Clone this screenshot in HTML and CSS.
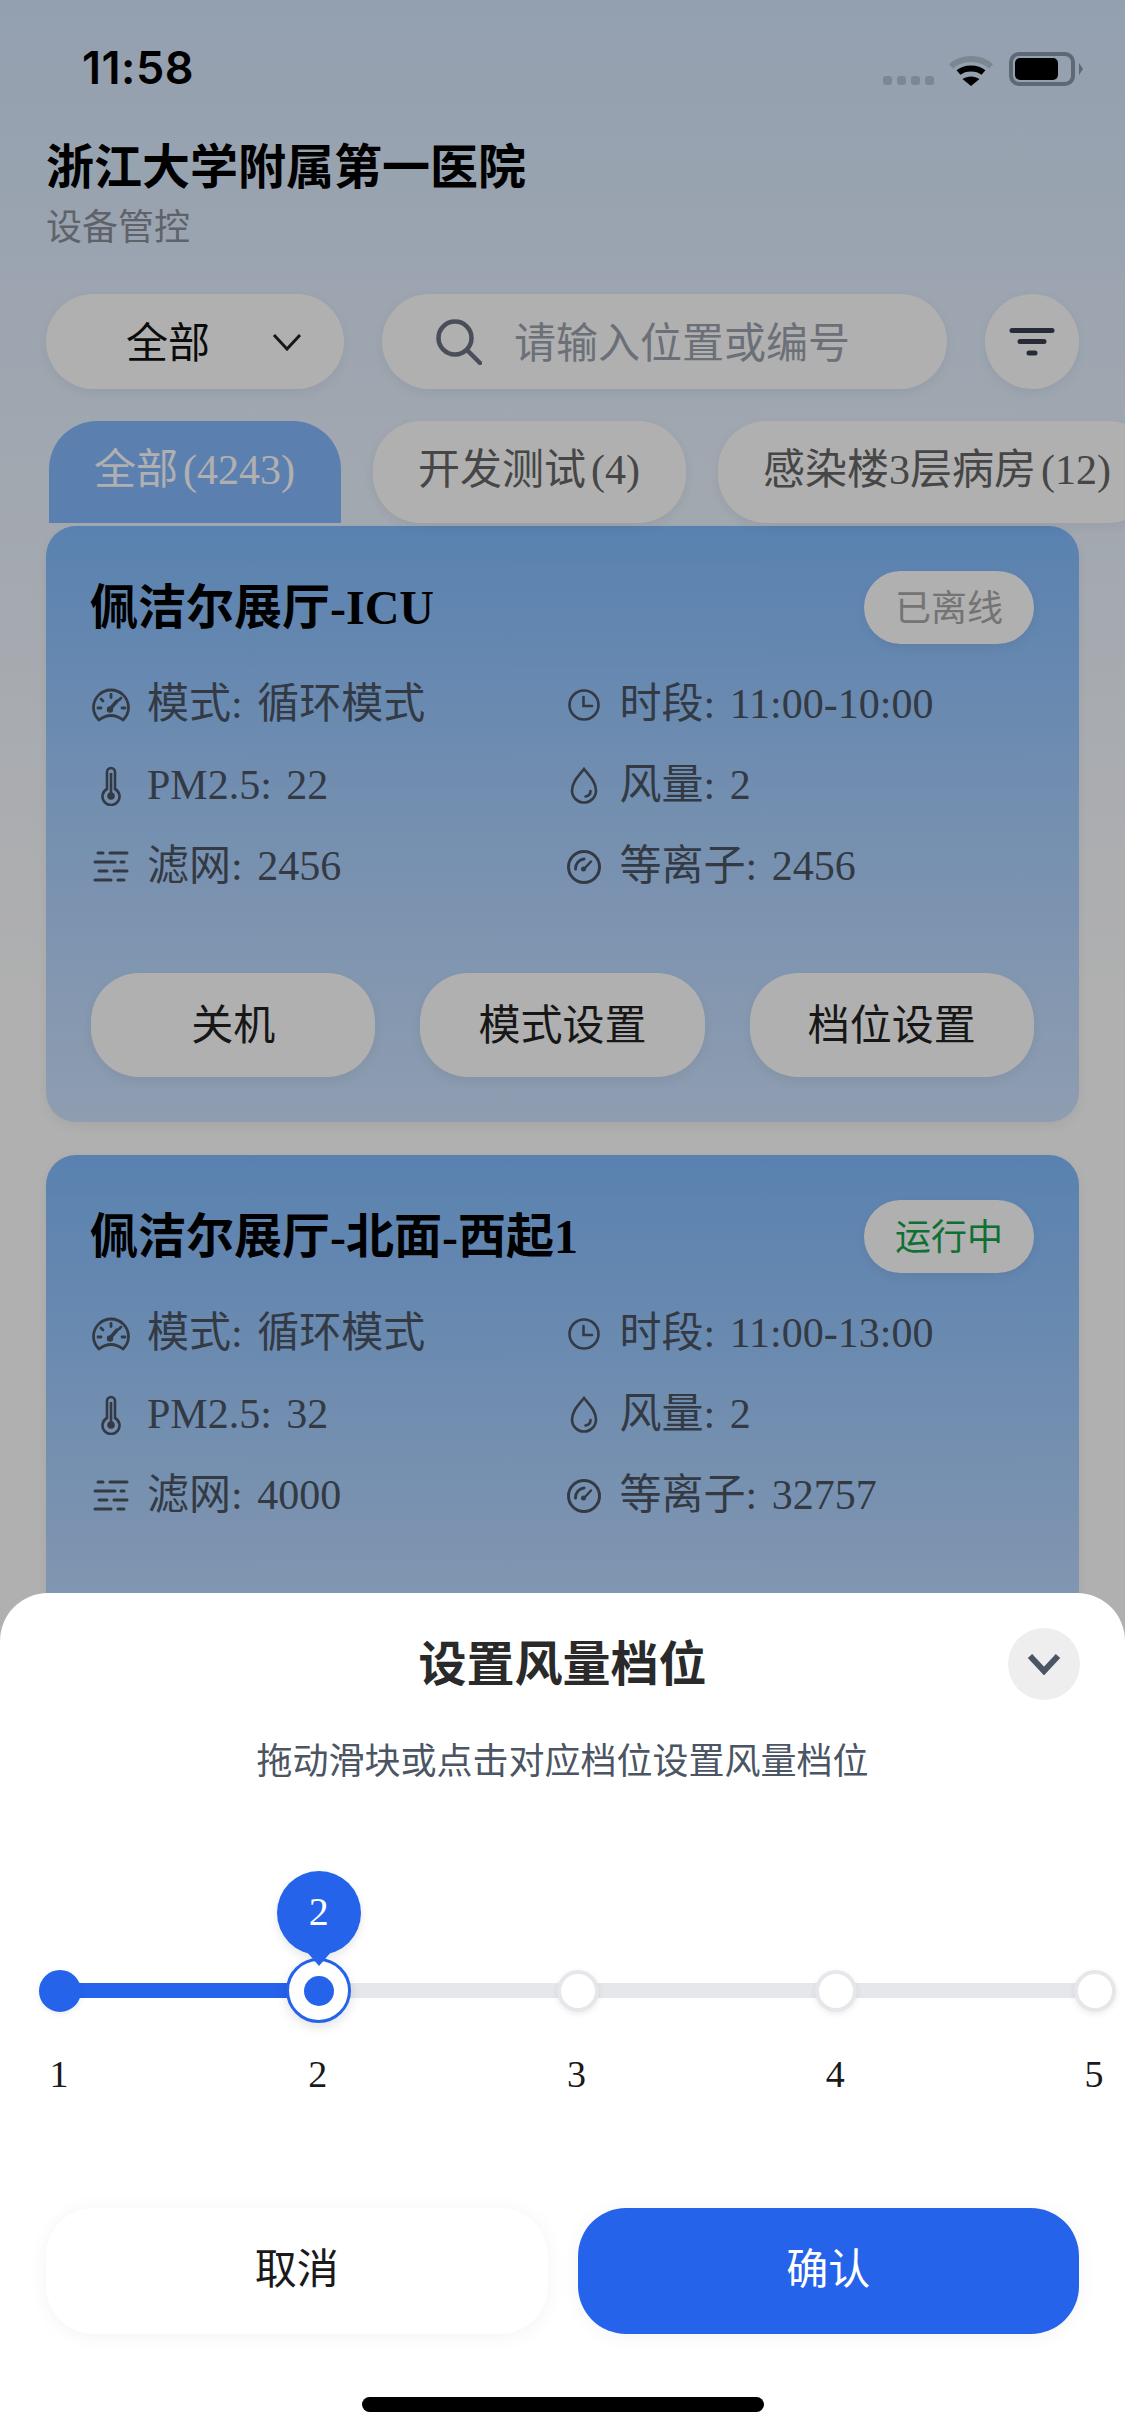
FILE: index.html
```html
<!DOCTYPE html>
<html lang="zh-CN">
<head>
    <meta charset="UTF-8">
    <meta name="viewport" content="width=device-width, initial-scale=1.0">
    <title>设备管控</title>
    <link rel="stylesheet" href="styles.css">
</head>
<body>
    <div class="page">
        <div class="status-bar">
            <span class="time">11:58</span>
            <div class="status-icons">
                <div class="signal"><i></i><i></i><i></i><i></i></div>
                <svg class="wifi" width="46" height="34" viewBox="0 0 46 34" fill="none">
                    <path d="M3 14.5C13.5 4.5 32.5 4.5 43 14.5" stroke="#7d8794" stroke-width="6"/>
                    <path d="M10.5 20.5C17 15 29 15 35.5 20.5" stroke="#000" stroke-width="6"/>
                    <path d="M23 34L14.5 27C19.5 23.5 26.5 23.5 31.5 27Z" fill="#000"/>
                </svg>
                <div class="battery"><i></i></div>
            </div>
        </div>

        <header class="header">
            <h1>浙江大学附属第一医院</h1>
            <p>设备管控</p>
        </header>

        <div class="controls">
            <div class="select">
                <span>全部</span>
                <svg width="30" height="18" viewBox="0 0 30 18" fill="none"><path d="M2 2L15 16L28 2" stroke="#222" stroke-width="3"/></svg>
            </div>
            <div class="search">
                <svg width="46" height="46" viewBox="0 0 46 46" fill="none" stroke="#6b7280" stroke-width="4.5">
                    <circle cx="19" cy="19" r="16.5"/>
                    <path d="M31 31L44 44" stroke-linecap="round"/>
                </svg>
                <span>请输入位置或编号</span>
            </div>
            <div class="filter-btn">
                <svg width="46" height="28" viewBox="0 0 46 28" fill="none" stroke="#374151" stroke-width="5" stroke-linecap="round">
                    <path d="M3 2.5H43"/>
                    <path d="M11 13.500H35"/>
                    <path d="M20 25H26"/>
                </svg>
            </div>
        </div>

        <div class="tabs">
            <div class="tab active">全部<span>(4243)</span></div>
            <div class="tab">开发测试<span>(4)</span></div>
            <div class="tab">感染楼3层病房<span>(12)</span></div>
        </div>

        <div class="card">
            <div class="card-top">
                <h2>佩洁尔展厅-ICU</h2>
                <span class="pill offline">已离线</span>
            </div>
            <div class="info">
                <div class="row">
                    <svg class="ic" width="38" height="34" viewBox="0 0 38 34"><use href="#i-gauge"/></svg>
                    <span>模式: 循环模式</span>
                </div>
                <div class="row">
                    <svg class="ic" width="32" height="32" viewBox="0 0 32 32"><use href="#i-clock"/></svg>
                    <span>时段: 11:00-10:00</span>
                </div>
                <div class="row">
                    <svg class="ic" width="20" height="40" viewBox="0 0 20 40"><use href="#i-thermo"/></svg>
                    <span>PM2.5: 22</span>
                </div>
                <div class="row">
                    <svg class="ic" width="28" height="38" viewBox="0 0 28 38"><use href="#i-drop"/></svg>
                    <span>风量: 2</span>
                </div>
                <div class="row">
                    <svg class="ic" width="36" height="32" viewBox="0 0 36 32"><use href="#i-lines"/></svg>
                    <span>滤网: 2456</span>
                </div>
                <div class="row">
                    <svg class="ic" width="36" height="36" viewBox="0 0 36 36"><use href="#i-dial"/></svg>
                    <span>等离子: 2456</span>
                </div>
            </div>
            <div class="actions">
                <button>关机</button>
                <button>模式设置</button>
                <button>档位设置</button>
            </div>
        </div>

        <div class="card">
            <div class="card-top">
                <h2>佩洁尔展厅-北面-西起1</h2>
                <span class="pill running">运行中</span>
            </div>
            <div class="info">
                <div class="row">
                    <svg class="ic" width="38" height="34" viewBox="0 0 38 34"><use href="#i-gauge"/></svg>
                    <span>模式: 循环模式</span>
                </div>
                <div class="row">
                    <svg class="ic" width="32" height="32" viewBox="0 0 32 32"><use href="#i-clock"/></svg>
                    <span>时段: 11:00-13:00</span>
                </div>
                <div class="row">
                    <svg class="ic" width="20" height="40" viewBox="0 0 20 40"><use href="#i-thermo"/></svg>
                    <span>PM2.5: 32</span>
                </div>
                <div class="row">
                    <svg class="ic" width="28" height="38" viewBox="0 0 28 38"><use href="#i-drop"/></svg>
                    <span>风量: 2</span>
                </div>
                <div class="row">
                    <svg class="ic" width="36" height="32" viewBox="0 0 36 32"><use href="#i-lines"/></svg>
                    <span>滤网: 4000</span>
                </div>
                <div class="row">
                    <svg class="ic" width="36" height="36" viewBox="0 0 36 36"><use href="#i-dial"/></svg>
                    <span>等离子: 32757</span>
                </div>
            </div>
        </div>
    </div>

    <div class="overlay"></div>

    <div class="sheet">
        <h3>设置风量档位</h3>
        <div class="close-btn">
            <svg width="34" height="22" viewBox="0 0 34 22" fill="none"><path d="M3 3L17 18L31 3" stroke="#4b5563" stroke-width="6"/></svg>
        </div>
        <p class="hint">拖动滑块或点击对应档位设置风量档位</p>

        <div class="slider">
            <div class="track"></div>
            <div class="track-fill"></div>
            <div class="stop"><div class="dot done"></div><span>1</span></div>
            <div class="stop">
                <div class="bubble">2</div>
                <div class="dot current"><i></i></div>
                <span>2</span>
            </div>
            <div class="stop"><div class="dot"></div><span>3</span></div>
            <div class="stop"><div class="dot"></div><span>4</span></div>
            <div class="stop"><div class="dot"></div><span>5</span></div>
        </div>

        <div class="sheet-actions">
            <button class="cancel">取消</button>
            <button class="confirm">确认</button>
        </div>
        <div class="home-bar"></div>
    </div>

    <!-- icons used by the cards -->
    <svg class="defs" width="0" height="0">
        <defs>
            <g id="i-gauge" fill="none" stroke="currentColor" stroke-width="2.8" stroke-linecap="round">
                <path d="M7 32C3.500 28.500 1.500 24.500 1.500 19.500A17.500 17.500 0 0 1 36.500 19.500C36.500 24.500 34.500 28.500 31 32C27 29 23 27.500 19 27.500C15 27.500 11 29 7 32Z"/>
                <path d="M19 6.500V9.500"/>
                <path d="M9 11L11 13"/>
                <path d="M6 20H9"/>
                <path d="M30 20H33"/>
                <path d="M29 10L27 12"/>
                <path d="M18 21L25 13" stroke-width="3.500"/>
                <circle cx="18" cy="21.500" r="1.800" fill="currentColor"/>
            </g>
            <g id="i-clock" fill="none" stroke="currentColor" stroke-width="2.600" stroke-linecap="round">
                <circle cx="16" cy="16" r="14.500"/>
                <path d="M15.500 8V17H24"/>
            </g>
            <g id="i-thermo" fill="none" stroke="currentColor" stroke-width="2.600">
                <path d="M6 23V6A4 4 0 0 1 14 6V23A8.500 8.500 0 1 1 6 23Z"/>
                <path d="M10 7V27"/>
                <circle cx="10" cy="30" r="3.800" fill="currentColor" stroke="none"/>
            </g>
            <g id="i-drop" fill="none" stroke="currentColor" stroke-width="2.600" stroke-linecap="round">
                <path d="M14 2C9 8.500 2 15 2 23.500A12 12 0 0 0 26 23.500C26 15 19 8.500 14 2Z"/>
                <path d="M20.500 24C20.500 27 18.500 29 15.500 29.500"/>
            </g>
            <g id="i-lines" fill="none" stroke="currentColor" stroke-width="3" stroke-linecap="round">
                <path d="M5 2H10M17 2H34"/>
                <path d="M2 11H22M28 11H31"/>
                <path d="M6 20H14M21 20H34"/>
                <path d="M2 29H18M25 29H31"/>
            </g>
            <g id="i-dial" fill="none" stroke="currentColor" stroke-width="3" stroke-linecap="round">
                <circle cx="18" cy="18" r="15.500"/>
                <path d="M9.500 20C9.500 14.500 13 10.500 18 10"/>
                <path d="M18 20L25 12.500" stroke-width="2.500"/>
                <circle cx="17.500" cy="20" r="2.500" fill="currentColor" stroke="none"/>
            </g>
        </defs>
    </svg>
</body>
</html>
```

FILE: styles.css
```css
* {
    box-sizing: border-box;
}

html, body {
    margin: 0;
    padding: 0;
}

body {
    width: 1125px;
    height: 2436px;
    position: relative;
    overflow: hidden;
    font-family: "Liberation Serif", "Noto Sans CJK SC", serif;
    color: #111;
}

h1, h2, h3, p {
    margin: 0;
}

button {
    border: none;
    font-family: inherit;
    cursor: pointer;
}

.page {
    height: 2436px;
    overflow: hidden;
    padding: 0 46px;
    background: linear-gradient(180deg, #d6e8ff 0, #ffffff 1000px);
}

.overlay {
    position: absolute;
    inset: 0;
    background: rgba(0, 0, 0, 0.31);
}

.defs {
    position: absolute;
}

/* status bar */
.status-bar {
    position: relative;
    z-index: 2;
    height: 133px;
    padding: 43px 4px 0 36px;
    display: flex;
    justify-content: space-between;
    align-items: flex-start;
}

.time {
    font-family: Inter, sans-serif;
    font-size: 45px;
    font-weight: 600;
    line-height: 50px;
    letter-spacing: 0.5px;
    color: #000;
}

.status-icons {
    display: flex;
    align-items: flex-end;
    margin-top: 9px;
}

.signal {
    display: flex;
    gap: 5px;
    margin: 0 14px 1px 0;
}

.signal i {
    width: 9px;
    height: 9px;
    border-radius: 3px;
    background: #7d8794;
}

.wifi {
    margin-right: 15px;
}

.battery {
    width: 66px;
    height: 34px;
    border: 4px solid #5e6877;
    border-radius: 10px;
    padding: 2px;
    position: relative;
}

.battery i {
    display: block;
    width: 43px;
    height: 22px;
    border-radius: 5px;
    background: #000;
}

.battery::after {
    content: "";
    position: absolute;
    right: -12px;
    top: 7px;
    border-left: 4px solid #5e6877;
    border-top: 6px solid transparent;
    border-bottom: 6px solid transparent;
}

/* header */
.header h1 {
    font-family: "Noto Sans CJK SC", sans-serif;
    font-size: 48px;
    font-weight: 700;
    line-height: 60px;
    color: #000;
}

.header p {
    font-family: "Noto Sans CJK SC", sans-serif;
    font-size: 36px;
    line-height: 48px;
    margin-top: 7px;
    color: #8a9099;
}

/* search row */
.controls {
    display: flex;
    gap: 38px;
    margin-top: 46px;
    height: 95px;
}

.select, .search, .filter-btn, .tab, .pill, .actions button {
    background: #fff;
    box-shadow: 0 4px 12px rgba(0, 0, 0, 0.06);
}

.select {
    width: 298px;
    border-radius: 48px;
    display: flex;
    align-items: center;
    padding: 0 42px 0 80px;
    justify-content: space-between;
    font-family: "Noto Sans CJK SC", sans-serif;
    font-size: 42px;
}

.search {
    width: 565px;
    border-radius: 48px;
    display: flex;
    align-items: center;
    padding-left: 54px;
    gap: 32px;
    font-family: "Noto Sans CJK SC", sans-serif;
    font-size: 42px;
    color: #9ca3af;
}

.select span, .search span {
    margin-bottom: 4px;
}

.filter-btn {
    width: 94px;
    border-radius: 50%;
    display: flex;
    align-items: center;
    justify-content: center;
}

/* tabs */
.tabs {
    display: flex;
    gap: 32px;
    margin: 32px -46px 0 3px;
    height: 102px;
}

.tab {
    flex-shrink: 0;
    padding: 0 46px 4px 45px;
    border-radius: 48px;
    display: flex;
    align-items: center;
    font-size: 42px;
    line-height: 48px;
    color: #666;
    white-space: nowrap;
}

.tab span {
    margin-left: 5px;
}

.tab.active {
    background: #85baff;
    color: #fff;
    box-shadow: none;
    border-radius: 48px 48px 0 0;
}

/* device cards */
.card {
    margin-top: 33px;
    height: 596px;
    padding: 45px 44px;
    border-radius: 30px;
    background: linear-gradient(180deg, #82bcff 0, #d0e4ff 100%);
    box-shadow: 0 4px 12px rgba(0, 0, 0, 0.06);
}

.tabs + .card {
    margin-top: 3px;
}

.card-top {
    display: flex;
    justify-content: space-between;
    align-items: center;
    height: 73px;
}

.card-top h2 {
    font-size: 48px;
    font-weight: 700;
    line-height: 60px;
    color: #000;
}

.pill {
    width: 170px;
    height: 73px;
    margin-right: 1px;
    padding-bottom: 5px;
    border-radius: 37px;
    display: flex;
    align-items: center;
    justify-content: center;
    font-family: "Noto Sans CJK SC", sans-serif;
    font-size: 36px;
}

.pill.offline {
    color: #a8a8a8;
}

.pill.running {
    color: #16a34a;
}

.info {
    display: grid;
    grid-template-columns: 1fr 1fr;
    grid-auto-rows: 81px;
    margin-top: 20px;
    font-size: 42px;
    line-height: 48px;
    word-spacing: 4px;
    color: #4b5563;
}

.row {
    display: flex;
    align-items: center;
    gap: 15px;
}

.row span {
    position: relative;
    top: -1px;
}

.ic {
    flex: 0 0 42px;
}

.actions {
    display: flex;
    gap: 45px;
    margin: 66px 1px 0;
}

.actions button {
    flex: 1;
    height: 104px;
    padding: 0 0 8px;
    border-radius: 48px;
    font-family: "Noto Sans CJK SC", sans-serif;
    font-size: 42px;
    color: #222;
}

/* bottom sheet */
.sheet {
    position: absolute;
    left: 0;
    right: 0;
    top: 1593px;
    bottom: 0;
    z-index: 3;
    background: #fff;
    border-radius: 48px 48px 0 0;
    padding-top: 37px;
    text-align: center;
}

.sheet h3 {
    font-family: "Noto Sans CJK SC", sans-serif;
    font-size: 48px;
    font-weight: 700;
    line-height: 60px;
    color: #2a2a2a;
}

.close-btn {
    position: absolute;
    top: 35px;
    right: 45px;
    width: 72px;
    height: 72px;
    border-radius: 50%;
    background: #eeeeee;
    display: flex;
    align-items: center;
    justify-content: center;
}

.hint {
    font-family: "Noto Sans CJK SC", sans-serif;
    font-size: 36px;
    line-height: 48px;
    margin-top: 44px;
    color: #4b5563;
}

/* slider */
.slider {
    position: relative;
    display: flex;
    justify-content: space-between;
    margin-top: 176px;
    padding: 0 9px 0 39px;
}

.track, .track-fill {
    position: absolute;
    left: 60px;
    top: 25px;
    height: 15px;
}

.track {
    right: 30px;
    background: #e5e7eb;
}

.track-fill {
    width: 259px;
    background: #2563eb;
}

.stop {
    position: relative;
    width: 42px;
    display: flex;
    flex-direction: column;
    align-items: center;
    font-size: 38px;
    line-height: 48px;
    color: #1a1a1a;
}

.stop span {
    margin: 27px 2px 0 0;
}

.dot {
    flex-shrink: 0;
    width: 42px;
    height: 42px;
    margin: 11.5px 0;
    border-radius: 50%;
    background: #fff;
    border: 4px solid #e5e7eb;
    box-shadow: 0 2px 6px rgba(0, 0, 0, 0.08);
    position: relative;
}

.dot.done {
    background: #2563eb;
    border-color: #2563eb;
}

.dot.current {
    width: 65px;
    height: 65px;
    margin: 0;
    border: 3px solid #2563eb;
    display: flex;
    align-items: center;
    justify-content: center;
    box-shadow: 0 4px 12px rgba(0, 0, 0, 0.12);
}

.dot.current i {
    width: 30px;
    height: 30px;
    border-radius: 50%;
    background: #2563eb;
}

.bubble {
    position: absolute;
    z-index: 1;
    top: -87px;
    left: -21px;
    width: 84px;
    height: 84px;
    padding-bottom: 3px;
    border-radius: 50%;
    background: #2563eb;
    color: #fff;
    font-size: 40px;
    display: flex;
    align-items: center;
    justify-content: center;
    box-shadow: 0 4px 10px rgba(0, 0, 0, 0.1);
}

.bubble::after {
    content: "";
    position: absolute;
    top: 81px;
    left: 30px;
    border-top: 14px solid #2563eb;
    border-left: 12px solid transparent;
    border-right: 12px solid transparent;
}

.sheet-actions {
    display: flex;
    gap: 30px;
    margin-top: 110px;
    padding: 0 46px;
}

.sheet-actions button {
    flex: 1;
    height: 126px;
    padding: 0 0 12px;
    border-radius: 48px;
    font-family: "Noto Sans CJK SC", sans-serif;
    font-size: 42px;
}

.cancel {
    background: #fff;
    color: #1a1a1a;
    box-shadow: 0 2px 20px rgba(0, 0, 0, 0.05);
}

.confirm {
    background: #2563eb;
    color: #fff;
    box-shadow: 0 2px 20px rgba(0, 0, 0, 0.05);
}

.home-bar {
    width: 402px;
    height: 15px;
    margin: 63px 0 0 362px;
    border-radius: 8px;
    background: #000;
}
```
